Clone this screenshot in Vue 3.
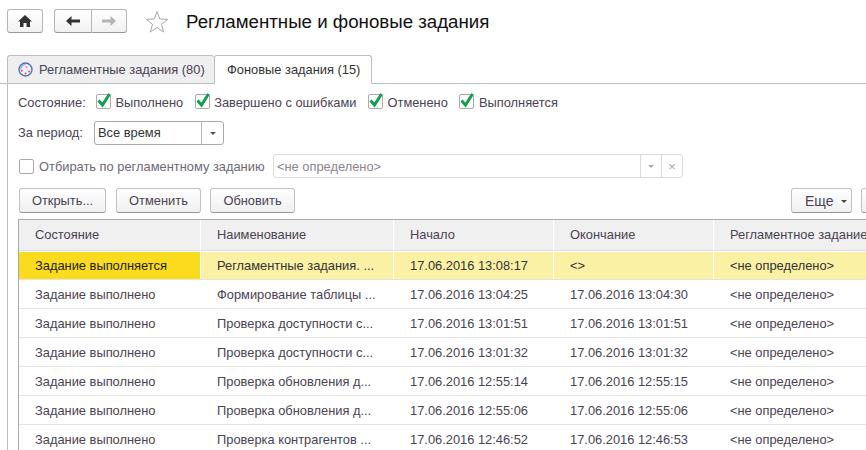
<script setup>
const checks = ['Выполнено', 'Завершено с ошибками', 'Отменено', 'Выполняется']
const rows = [
  ['Задание выполнено', 'Формирование таблицы ...', '17.06.2016 13:04:25', '17.06.2016 13:04:30', '<не определено>'],
  ['Задание выполнено', 'Проверка доступности с...', '17.06.2016 13:01:51', '17.06.2016 13:01:51', '<не определено>'],
  ['Задание выполнено', 'Проверка доступности с...', '17.06.2016 13:01:32', '17.06.2016 13:01:32', '<не определено>'],
  ['Задание выполнено', 'Проверка обновления д...', '17.06.2016 12:55:14', '17.06.2016 12:55:15', '<не определено>'],
  ['Задание выполнено', 'Проверка обновления д...', '17.06.2016 12:55:06', '17.06.2016 12:55:06', '<не определено>'],
  ['Задание выполнено', 'Проверка контрагентов ...', '17.06.2016 12:46:52', '17.06.2016 12:46:53', '<не определено>'],
]
</script>

<template>
  <div class="page">
    <header class="top">
      <button class="navbtn home">
        <svg width="16" height="14" viewBox="0 0 16 14"><path d="M8 1 L15 7.500 H13 V13 H9.500 V9 H6.500 V13 H3 V7.500 H1 Z" fill="#333"/></svg>
      </button>
      <div class="navgroup">
        <button class="navbtn half">
          <svg width="16" height="12" viewBox="0 0 16 12"><path d="M1 6 L6.500 1 V4.500 H15 V7.500 H6.500 V11 Z" fill="#333"/></svg>
        </button>
        <button class="navbtn half off">
          <svg width="16" height="12" viewBox="0 0 16 12"><path d="M15 6 L9.500 1 V4.500 H1 V7.500 H9.500 V11 Z" fill="#b4b4b4"/></svg>
        </button>
      </div>
      <svg class="star" width="24" height="24" viewBox="0 0 24 24"><path d="M12 1.500 L14.800 9 L22.800 9.300 L16.500 14.300 L18.700 22 L12 17.500 L5.300 22 L7.500 14.300 L1.200 9.300 L9.200 9 Z" fill="#fff" stroke="#a8a8a8"/></svg>
      <h1 class="title">Регламентные и фоновые задания</h1>
    </header>

    <nav class="tabs">
      <div class="tab inactive">
        <svg width="15" height="15" viewBox="0 0 15 15"><circle cx="7.500" cy="7.500" r="6.500" fill="#eef1fa" stroke="#4f70b4" stroke-width="1.400"/><path d="M2.500 7.500 A5 5 0 0 1 7.500 2.500" fill="none" stroke="#9db2de" stroke-width="1.500"/><circle cx="3.800" cy="8.800" r="1" fill="#d9534f"/><circle cx="7.500" cy="11.500" r="1" fill="#d9534f"/><circle cx="11" cy="9.500" r="1" fill="#d9534f"/><circle cx="8.500" cy="5" r="0.800" fill="#d9534f"/></svg>
        Регламентные задания (80)
      </div>
      <div class="tab active">Фоновые задания (15)</div>
    </nav>

    <main class="panel">
      <div class="row-state">
        <span class="lbl">Состояние:</span>
        <label v-for="c in checks" :key="c" class="chk">
          <span class="box">
            <svg width="16" height="17" viewBox="0 0 16 17"><path d="M2.500 8.500 L6.500 13 L13.500 2" fill="none" stroke="#10a050" stroke-width="3"/></svg>
          </span>
          <span class="chk-text">{{ c }}</span>
        </label>
      </div>

      <div class="row-period">
        <span class="lbl">За период:</span>
        <div class="select">
          <span class="select-text">Все время</span>
          <span class="select-btn"><i class="caret"></i></span>
        </div>
      </div>

      <div class="row-filter">
        <span class="box empty"></span>
        <span class="muted">Отбирать по регламентному заданию</span>
        <div class="field">
          <span class="field-text">&lt;не определено&gt;</span>
          <span class="field-btn"><i class="caret light"></i></span>
          <span class="field-btn last">×</span>
        </div>
      </div>

      <div class="toolbar">
        <button class="btn w87">Открыть...</button>
        <button class="btn w85">Отменить</button>
        <button class="btn w85">Обновить</button>
        <span class="spacer"></span>
        <button class="btn more"><span>Еще</span><i class="caret dark"></i></button>
        <button class="btn stub"></button>
      </div>

      <section class="table">
        <div class="grid head">
          <div>Состояние</div>
          <div>Наименование</div>
          <div>Начало</div>
          <div>Окончание</div>
          <div>Регламентное задание</div>
        </div>
        <div class="grid current">
          <div class="cur-cell">Задание выполняется</div>
          <div>Регламентные задания. ...</div>
          <div>17.06.2016 13:08:17</div>
          <div>&lt;&gt;</div>
          <div>&lt;не определено&gt;</div>
        </div>
        <div v-for="(r, i) in rows" :key="i" class="grid body">
          <div v-for="(c, j) in r" :key="j">{{ c }}</div>
        </div>
      </section>
    </main>
  </div>
</template>

<style scoped>
.page {
  width: 866px;
  height: 450px;
  overflow: hidden;
  background: #fff;
  font-family: "Liberation Sans", Arial, sans-serif;
  font-size: 12.87px;
  color: #4b4352;
}
button { font: inherit; color: inherit; padding: 0; }
.top {
  display: flex;
  align-items: center;
  height: 24px;
  padding: 9px 0 0 7px;
}
.navbtn {
  display: flex;
  align-items: center;
  justify-content: center;
  background: linear-gradient(#fff, #f1f1f1);
  border: 1px solid #b5b5b5;
  border-bottom-color: #999;
  border-radius: 3px;
  height: 24px;
}
.home { width: 36px; }
.navgroup { display: flex; margin-left: 11px; }
.half { width: 37px; }
.half:first-child { border-radius: 3px 0 0 3px; border-right: 0; width: 37px; }
.half.off { border-radius: 0 3px 3px 0; width: 36px; }
.star { margin-left: 18px; margin-top: 1px; }
.title {
  margin: 1px 0 0 17px;
  font-size: 18.7px;
  font-weight: 400;
  color: #111;
  line-height: 24px;
}
.tabs {
  display: flex;
  align-items: flex-end;
  height: 29px;
  margin-top: 22px;
  padding-left: 7px;
  box-shadow: inset 0 -1px 0 #bdbdbd;
  box-sizing: content-box;
}
.tab {
  display: flex;
  align-items: center;
  box-sizing: border-box;
  border: 1px solid #bdbdbd;
  border-radius: 3px 3px 0 0;
  height: 29px;
}
.inactive {
  width: 207px;
  background: #efefef;
  gap: 6px;
  padding-left: 10px;
  border-right: 0;
}
.active {
  width: 158px;
  background: #fff;
  color: #333;
  border-bottom-color: #fff;
  padding-left: 12px;
}
.panel {
  margin-left: 7px;
  border-left: 1px solid #bdbdbd;
  padding-left: 10px;
  display: flex;
  flex-direction: column;
  height: 366px;
  overflow: hidden;
}
.row-state {
  display: flex;
  align-items: center;
  height: 15px;
  margin-top: 10px;
}
.lbl { width: 78px; flex: none; }
.row-state .lbl, .chk-text { padding-top: 2px; }
.chk { display: flex; align-items: center; gap: 4.500px; margin-right: 11.500px; }
.box {
  position: relative;
  display: block;
  box-sizing: border-box;
  width: 15px;
  height: 15px;
  border: 1px solid #aaa;
  border-radius: 2px;
  background: #fff;
  flex: none;
}
.box svg { position: absolute; left: -1px; top: -3px; }
.row-period {
  display: flex;
  align-items: center;
  height: 24px;
  margin-top: 12px;
}
.row-period .lbl, .select-text { padding-bottom: 2px; }
.lbl + .select { margin-left: -2px; }
.select {
  display: flex;
  width: 130px;
  height: 24px;
  box-sizing: border-box;
  border: 1px solid #aaa;
  border-radius: 3px;
  align-items: center;
}
.select-text { flex: 1; padding-left: 3px; color: #333; }
.select-btn {
  width: 21px;
  height: 22px;
  border-left: 1px solid #bbb;
  display: flex;
  align-items: center;
  justify-content: center;
}
.caret {
  display: inline-block;
  width: 0;
  height: 0;
  border-left: 3px solid transparent;
  border-right: 3px solid transparent;
  border-top: 3px solid #555;
}
.caret.light { border-top-color: #aaa; }
.caret.dark { border-top-color: #444; margin-left: 7px; margin-top: 1px; }
.row-filter {
  display: flex;
  align-items: center;
  height: 24px;
  margin-top: 9px;
  padding-left: 1px;
}
.empty { border-radius: 2px; }
.muted { margin-left: 5px; color: #6e6873; width: 234px; flex: none; white-space: nowrap; }
.field {
  display: flex;
  align-items: center;
  box-sizing: border-box;
  width: 410px;
  height: 24px;
  border: 1px solid #dcdcdc;
  border-radius: 3px;
}
.field-text { flex: 1; padding-left: 3px; color: #8a8590; }
.field-btn {
  width: 20px;
  height: 22px;
  border-left: 1px solid #dcdcdc;
  display: flex;
  align-items: center;
  justify-content: center;
  color: #aaa;
}
.toolbar {
  display: flex;
  align-items: center;
  margin-top: 10px;
  margin-left: 1px;
  height: 25px;
  width: 862px;
}
.btn {
  box-sizing: border-box;
  height: 25px;
  background: linear-gradient(#fff, #f0f0f0);
  border: 1px solid #c2c2c2;
  border-bottom-color: #999;
  border-radius: 3px;
  margin-right: 9px;
  flex: none;
}
.w87 { width: 87px; margin-right: 10px; }
.w85 { width: 85px; }
.spacer { flex: 1; }
.more {
  width: 61px;
  display: flex;
  align-items: center;
  padding-left: 13px;
  font-size: 14px;
}
.stub { width: 20px; margin-right: 0; }
.table {
  width: 860px;
  margin-top: 6px;
  border-top: 1px solid #aaa;
  border-left: 1px solid #aaa;
  box-sizing: border-box;
  flex: none;
}
.grid {
  display: grid;
  grid-template-columns: 182px 193px 160px 160px 160px;
  height: 29px;
  align-items: stretch;
  box-sizing: border-box;
}
.grid > div {
  padding-left: 16px;
  display: flex;
  align-items: center;
  white-space: nowrap;
}
.head {
  height: 32px;
  background: #f0f0f0;
  border-bottom: 1px solid #fff;
}
.head > div { border-right: 1px solid #fff; box-sizing: border-box; border-bottom: 1px solid #ddd; padding-bottom: 2px; }
.current {
  height: 28px;
  background: #fbf1a5;
  color: #333;
  border-bottom: 1px solid #e4e4e4;
}
.current > div { border-right: 1px solid #fff; box-sizing: border-box; }
.current > .cur-cell { background: #fadb1e; color: #222; }
.body {
  border-bottom: 1px solid #e4e4e4;
}
</style>
